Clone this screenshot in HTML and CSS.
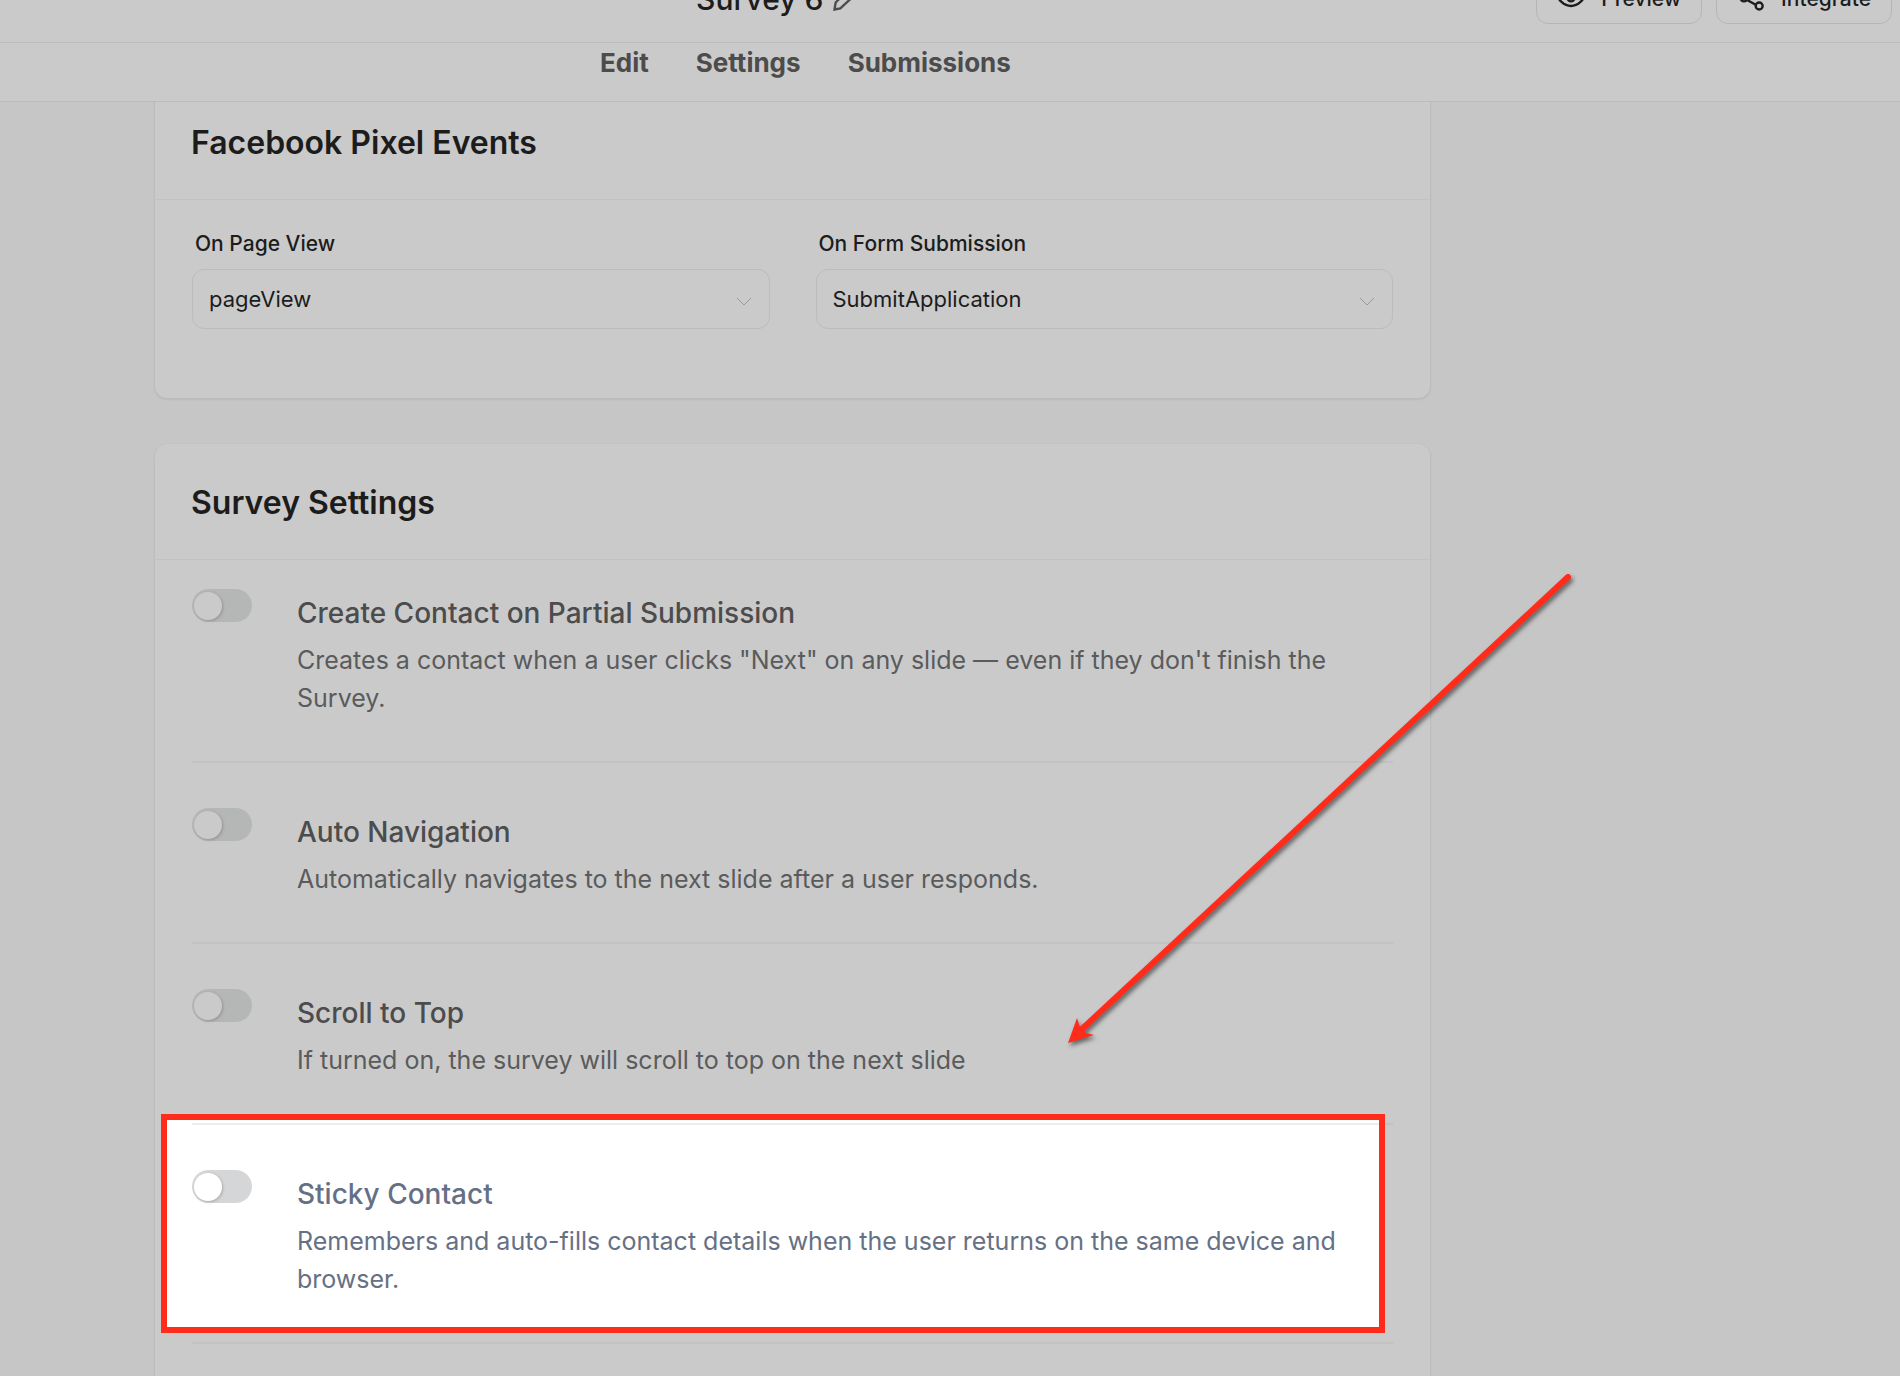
FILE: index.html
```
<!DOCTYPE html>
<html lang="en">
<head>
  <meta charset="UTF-8">
  <meta name="viewport" content="width=device-width, initial-scale=1">
  <title>Survey 6 - Settings</title>
  <link rel="stylesheet" href="styles.css">
</head>
<body>
  <!-- Header, scrolled partly out of view -->
  <header class="topbar">
    <div class="title">
      <span>Survey 6</span>
      <svg class="pencil" viewBox="0 0 24 24" aria-hidden="true"><path d="M3 21l1-6L16 3a3 3 0 0 1 5 5L8 20z"/></svg>
    </div>
    <div class="actions">
      <button type="button" class="btn">
        <svg viewBox="0 0 24 24" aria-hidden="true"><path d="M1 11s4-7 11-7 11 7 11 7-4 7-11 7S1 11 1 11z"/><circle cx="12" cy="11" r="3"/></svg>
        Preview
      </button>
      <button type="button" class="btn">
        <svg viewBox="0 0 24 24" aria-hidden="true"><circle cx="19" cy="5" r="3"/><circle cx="6" cy="11" r="3"/><circle cx="19" cy="18" r="3"/><path d="M9 13l7 4M16 6l-7 4"/></svg>
        Integrate
      </button>
    </div>
  </header>

  <nav class="tabs">
    <a href="#edit">Edit</a>
    <a href="#settings">Settings</a>
    <a href="#submissions">Submissions</a>
  </nav>

  <main class="content">
    <section class="card card-pixel">
      <h2>Facebook Pixel Events</h2>
      <div class="fields">
        <div class="field">
          <label for="page-view">On Page View</label>
          <div class="select">
            <select id="page-view"><option>pageView</option></select>
            <svg viewBox="0 0 16 10" aria-hidden="true"><path d="M1 1l7 7 7-7"/></svg>
          </div>
        </div>
        <div class="field">
          <label for="form-submit">On Form Submission</label>
          <div class="select">
            <select id="form-submit"><option>SubmitApplication</option></select>
            <svg viewBox="0 0 16 10" aria-hidden="true"><path d="M1 1l7 7 7-7"/></svg>
          </div>
        </div>
      </div>
    </section>

    <section class="card">
      <h2>Survey Settings</h2>
      <div class="settings">
        <div class="setting">
          <input type="checkbox" class="toggle" id="partial">
          <div class="text">
            <label for="partial">Create Contact on Partial Submission</label>
            <p>Creates a contact when a user clicks "Next" on any slide — even if they don't finish the Survey.</p>
          </div>
        </div>
        <div class="setting">
          <input type="checkbox" class="toggle" id="auto-nav">
          <div class="text">
            <label for="auto-nav">Auto Navigation</label>
            <p>Automatically navigates to the next slide after a user responds.</p>
          </div>
        </div>
        <div class="setting">
          <input type="checkbox" class="toggle" id="scroll-top">
          <div class="text">
            <label for="scroll-top">Scroll to Top</label>
            <p>If turned on, the survey will scroll to top on the next slide</p>
          </div>
        </div>
        <div class="setting highlight">
          <input type="checkbox" class="toggle" id="sticky">
          <div class="text">
            <label for="sticky">Sticky Contact</label>
            <p>Remembers and auto-fills contact details when the user returns on the same device and browser.</p>
          </div>
        </div>
        <div class="setting next"></div>
      </div>
    </section>
  </main>

  <!-- Arrow pointing at the highlighted setting -->
  <svg class="arrow" viewBox="0 0 520 490" aria-hidden="true">
    <path class="shaft" d="M508 17L22 469"/>
    <path class="head" d="M8 483L17 458L20 467L26 473L34 475z"/>
  </svg>
</body>
</html>
```
FILE: styles.css
```
:root {
  --page: #c6c6c6;
  --surface: #cacaca;
  --line: #bcbcbc;
  --line-soft: #c2c2c2;
  --ink: #1c1c1c;
  --muted: #4c4c4d;
  --text: #5a5b5c;
  --red: #ff2c1b;
}
* {box-sizing: border-box; margin: 0; padding: 0;}
body {
  display: flex;
  flex-direction: column;
  height: 100vh;
  overflow: hidden;
  position: relative;
  background: var(--page);
  color: var(--ink);
  font-family: Inter, "Liberation Sans", sans-serif;
}

/* Header */
.topbar {
  flex: none;
  display: flex;
  align-items: center;
  justify-content: space-between;
  margin-top: -46px;
  padding: 19px 8px 18px 696px;
  background: var(--surface);
  border-bottom: 1px solid var(--line);
}
.title {display: flex; align-items: center; gap: 8px; font-size: 30px; font-weight: 500; line-height: 42px;}
.pencil {width: 28px; height: 28px; fill: none; stroke: var(--muted); stroke-width: 2;}
.actions {display: flex; gap: 14px;}
.btn {
  display: flex;
  align-items: center;
  gap: 16px;
  height: 51px;
  padding: 0 20px;
  border: 1px solid #b6b6b6;
  border-radius: 12px;
  background: none;
  color: var(--ink);
  font: 500 21px Inter, "Liberation Sans", sans-serif;
}
.btn svg {width: 28px; height: 28px; fill: none; stroke: currentColor; stroke-width: 2;}

/* Tabs */
.tabs {
  flex: none;
  display: flex;
  gap: 47px;
  padding: 0 24px 19px 600px;
  background: var(--surface);
  border-bottom: 1px solid var(--line);
}
.tabs a {color: var(--muted); font-size: 26px; font-weight: 700; line-height: 39px; text-decoration: none;}

/* Cards */
.content {flex: 1; min-height: 0; overflow: hidden; padding-left: 155px;}
.card {
  max-width: 1275px;
  margin-bottom: 46px;
  background: var(--surface);
  border-radius: 12px;
  box-shadow: 0 1px 2px 1px rgba(0, 0, 0, .06);
}
.card-pixel {margin-top: -18px;}
.card h2 {
  padding: 2px 36px 0;
  border-bottom: 1px solid var(--line-soft);
  font-size: 32px;
  font-weight: 600;
  line-height: 113px;
}

/* Select fields */
.fields {display: flex; gap: 46px; padding: 31px 37px 69px;}
.field {flex: 1;}
.field label {display: block; padding-left: 3px; margin-bottom: 12px; font-size: 21px; font-weight: 500; line-height: 26px;}
.select {position: relative;}
.select select {
  display: block;
  width: 100%;
  height: 60px;
  padding: 0 16px;
  border: 1px solid var(--line);
  border-radius: 12px;
  appearance: none;
  background: none;
  color: var(--ink);
  font: 400 22px Inter, "Liberation Sans", sans-serif;
}
.select svg {
  position: absolute;
  right: 18px;
  top: 28px;
  width: 16px;
  height: 10px;
  fill: none;
  stroke: #999;
  pointer-events: none;
}

/* Settings list */
.settings {isolation: isolate; padding: 0 37px;}
.setting {
  position: relative;
  display: flex;
  gap: 45px;
  padding: 45px 0 44px;
  border-top: 2px solid var(--line-soft);
}
.setting:first-child {padding-top: 29px; border-top: none;}
.text {flex: 1;}
.text label {display: block; margin-bottom: 4px; color: var(--muted); font-size: 28px; font-weight: 500; line-height: 48px;}
.text p {color: var(--text); font-size: 25px; line-height: 38px;}
.next {height: 180px;}

.toggle {
  flex: none;
  display: flex;
  align-items: center;
  width: 60px;
  height: 33px;
  padding: 0 2px;
  border-radius: 17px;
  appearance: none;
  background: #b5b6b6;
}
.toggle::before {
  content: "";
  width: 28px;
  height: 28px;
  border-radius: 50%;
  background: var(--surface);
  box-shadow: 1px 1px 3px rgba(0, 0, 0, .2);
}
.toggle:checked {justify-content: flex-end;}

/* Highlighted setting: the divider runs under the red frame */
.highlight {
  border-image: linear-gradient(to right, #eaecf0 calc(100% - 14px), var(--red) 0 calc(100% - 8px), var(--line-soft) 0) 2 0;
}
.highlight::before {
  content: "";
  position: absolute;
  inset: -11px 8px 9px -31px;
  z-index: -1;
  border: 6px solid var(--red);
  background: #fff;
}
.highlight .text label, .highlight .text p {color: #667085;}
.highlight .toggle {background: #d5d6d7;}
.highlight .toggle::before {background: #fff;}

/* Arrow */
.arrow {
  position: absolute;
  left: 1060px;
  top: 560px;
  width: 520px;
  height: 490px;
  filter: drop-shadow(2px 3px 2px rgba(0, 0, 0, .5));
  pointer-events: none;
}
.shaft {fill: none; stroke: var(--red); stroke-width: 6; stroke-linecap: round;}
.head {fill: var(--red);}
```
